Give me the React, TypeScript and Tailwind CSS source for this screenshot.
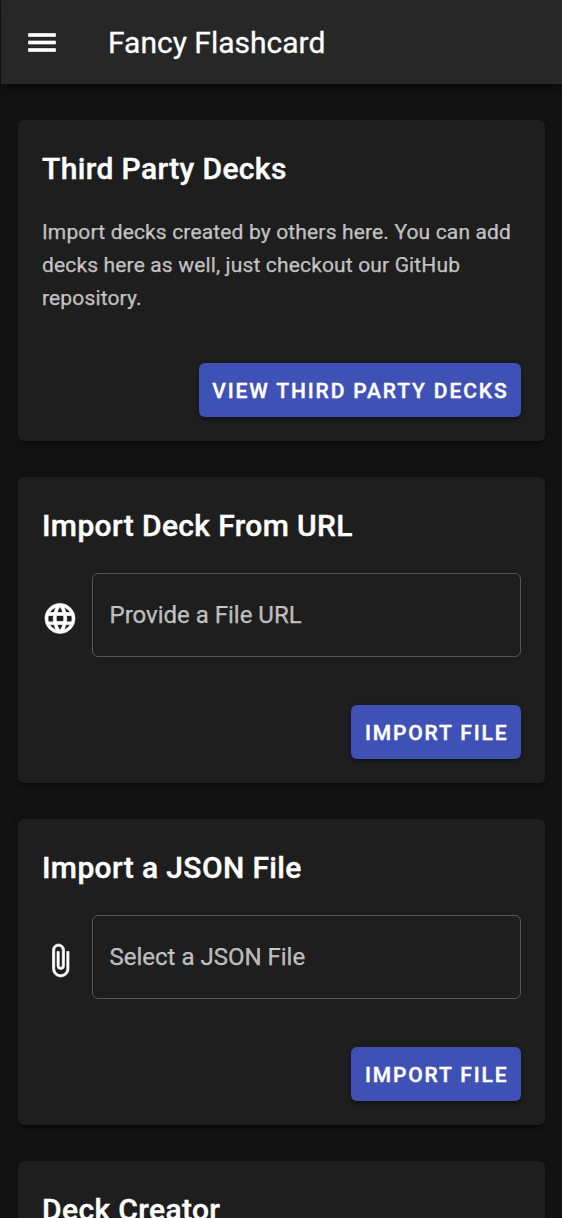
import type { ReactNode } from "react";

const MENU_PATH = "M3,6H21V8H3V6M3,11H21V13H3V11M3,16H21V18H3V16Z";
const WEB_PATH =
  "M16.36,14C16.44,13.34 16.5,12.68 16.5,12C16.5,11.32 16.44,10.66 16.36,10H19.74C19.9,10.64 20,11.31 20,12C20,12.69 19.9,13.36 19.74,14M14.59,19.56C15.19,18.45 15.65,17.25 15.97,16H18.92C17.96,17.65 16.43,18.93 14.59,19.56M14.34,14H9.66C9.56,13.34 9.5,12.68 9.5,12C9.5,11.32 9.56,10.65 9.66,10H14.34C14.43,10.65 14.5,11.32 14.5,12C14.5,12.68 14.43,13.34 14.34,14M12,19.96C11.17,18.76 10.5,17.43 10.09,16H13.91C13.5,17.43 12.83,18.76 12,19.96M8,8H5.08C6.03,6.34 7.57,5.06 9.4,4.44C8.8,5.55 8.35,6.75 8,8M5.08,16H8C8.35,17.25 8.8,18.45 9.4,19.56C7.57,18.93 6.03,17.65 5.08,16M4.26,14C4.1,13.36 4,12.69 4,12C4,11.31 4.1,10.64 4.26,10H7.64C7.56,10.66 7.5,11.32 7.5,12C7.5,12.68 7.56,13.34 7.64,14M12,4.03C12.83,5.23 13.5,6.57 13.91,8H10.09C10.5,6.57 11.17,5.23 12,4.03M18.92,8H15.97C15.65,6.75 15.19,5.55 14.59,4.44C16.43,5.07 17.96,6.34 18.92,8M12,2C6.47,2 2,6.5 2,12A10,10 0 0,0 12,22A10,10 0 0,0 22,12A10,10 0 0,0 12,2Z";
const PAPERCLIP_PATH =
  "M16.5,6V17.5A4,4 0 0,1 12.5,21.5A4,4 0 0,1 8.5,17.5V5A2.5,2.5 0 0,1 11,2.5A2.5,2.5 0 0,1 13.5,5V15.5A1,1 0 0,1 12.5,16.5A1,1 0 0,1 11.5,15.5V6H10V15.5A2.5,2.5 0 0,0 12.5,18A2.5,2.5 0 0,0 15,15.5V5A4,4 0 0,0 11,1A4,4 0 0,0 7,5V17.5A5.5,5.5 0 0,0 12.5,23A5.5,5.5 0 0,0 18,17.5V6H16.5Z";

function Icon({ path }: { path: string }) {
  return (
    <svg
      viewBox="0 -0.33 24 24"
      className="size-9 shrink-0 overflow-visible fill-white stroke-white stroke-[0.45]"
      aria-hidden="true"
    >
      <path d={path} />
    </svg>
  );
}

function Card({ title, children }: { title: string; children?: ReactNode }) {
  return (
    <section className="rounded-md bg-[#1e1e1e] p-6 shadow-[0_4.5px_1.5px_-3px_rgba(0,0,0,0.2),0_3px_3px_0_rgba(0,0,0,0.14),0_1.5px_7.5px_0_rgba(0,0,0,0.12)]">
      <h2 className="h-12 pt-px text-[30px] leading-[48px] font-medium tracking-[0.0125em] text-white [-webkit-text-stroke:0.4px]">
        {title}
      </h2>
      {children}
    </section>
  );
}

function ActionButton({ children }: { children: ReactNode }) {
  return (
    <div className="mt-12 flex justify-end">
      <button
        type="button"
        className="h-[54px] rounded-md bg-[#3f51b5] pt-[3px] pr-3 pl-[13.5px] text-[21px] font-medium tracking-[0.0892857em] whitespace-nowrap text-white uppercase shadow-[0_4.5px_1.5px_-3px_rgba(0,0,0,0.2),0_3px_3px_0_rgba(0,0,0,0.14),0_1.5px_7.5px_0_rgba(0,0,0,0.12)] [-webkit-text-stroke:0.4px]"
      >
        {children}
      </button>
    </div>
  );
}

function FileField({ icon, label }: { icon: string; label: string }) {
  return (
    <div className="mt-6 flex items-center gap-[13.5px]">
      <div className="pt-[6px]">
        <Icon path={icon} />
      </div>
      <div className="flex h-[84px] flex-1 items-center rounded-md border border-[#565656] px-[17px] text-2xl leading-[30px] text-white/70 [-webkit-text-stroke:0.25px]">
        {label}
      </div>
    </div>
  );
}

export default function App() {
  return (
    <div className="flex h-[1218px] flex-col overflow-hidden bg-[#121212] font-[Roboto,sans-serif] text-white">
      <header className="z-10 ml-px flex h-[84px] shrink-0 items-center bg-[#272727] pl-[23px] shadow-[0_3px_6px_-1.5px_rgba(0,0,0,0.2),0_6px_7.5px_0_rgba(0,0,0,0.14),0_1.5px_15px_0_rgba(0,0,0,0.12)]">
        <button type="button" aria-label="Menu">
          <Icon path={MENU_PATH} />
        </button>
        <h1 className="pl-12 text-[30px] leading-[45px] [-webkit-text-stroke:0.3px]">Fancy Flashcard</h1>
      </header>
      <main className="flex flex-col gap-9 py-9 pr-[17.5px] pl-[18px]">
        <Card title="Third Party Decks">
          <p className="mt-6 text-[21px] leading-[33px] tracking-[0.0071428em] text-white/70 [-webkit-text-stroke:0.25px]">
            Import decks created by others here. You can add decks here as well, just checkout our GitHub repository.
          </p>
          <ActionButton>View Third Party Decks</ActionButton>
        </Card>
        <Card title="Import Deck From URL">
          <FileField icon={WEB_PATH} label="Provide a File URL" />
          <ActionButton>Import File</ActionButton>
        </Card>
        <Card title="Import a JSON File">
          <FileField icon={PAPERCLIP_PATH} label="Select a JSON File" />
          <ActionButton>Import File</ActionButton>
        </Card>
        <Card title="Deck Creator" />
      </main>
    </div>
  );
}
